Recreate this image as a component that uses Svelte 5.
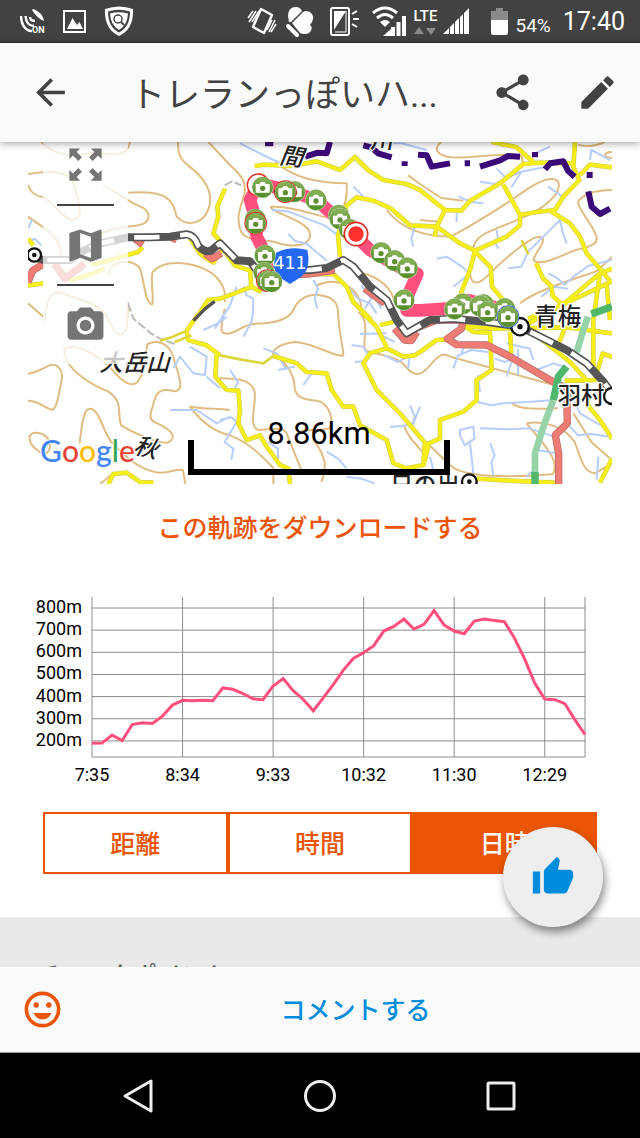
<script lang="ts">
  type Marker = { x: number; y: number; ring?: string };

  const contours = [
    "M300,152C420,145 432,170 446,224C476,255 530,250 545,190C555,140 520,100 480,70C448,45 450,20 450,0",
    "M541,0L606,69C640,100 655,120 650,154C640,190 620,230 640,270C660,300 700,290 740,300C800,320 840,310 846,284C850,250 800,235 760,215C735,205 715,190 740,194C800,195 850,215 890,225C940,225 960,190 956,124C870,122 800,110 742,60",
    "M226,134C240,130 300,180 330,190C370,205 375,240 330,250C290,255 240,260 220,276",
    "M0,96C60,85 130,85 138,130C150,180 175,230 130,234C100,225 80,180 40,164C15,160 5,145 0,128",
    "M0,224L46,256C80,280 100,300 100,354",
    "M40,0C90,50 140,40 190,34C240,36 300,50 306,0",
    "M242,400C240,350 320,350 336,380C350,420 350,480 372,488C380,480 366,410 374,390C400,360 440,360 480,366C540,375 600,415 590,480",
    "M0,484L46,524",
    "M50,540C55,450 80,440 120,460C180,480 220,490 240,530C260,580 280,590 296,560L300,480",
    "M110,620C150,600 220,650 250,680C290,730 320,740 335,710C360,680 350,620 360,605C400,590 430,610 440,660C460,720 465,745 440,748C400,738 385,745 375,790C365,820 360,835 390,845C430,865 450,885 420,902C390,905 310,870 280,850C265,820 290,780 240,748C180,725 120,680 110,640Z",
    "M0,695C40,690 60,665 80,668C105,680 105,700 100,720C90,770 85,805 70,803C45,795 30,775 0,776",
    "M5,890C0,865 50,865 65,900C70,935 50,940 35,930C15,915 5,905 5,890",
    "M155,905C160,860 165,800 185,800C215,800 225,870 250,900C290,940 320,975 380,990C420,1000 450,975 465,985L472,1026",
    "M216,1026L261,990",
    "M606,804C570,800 520,800 486,794C520,840 560,870 606,880C660,900 700,940 736,978V1026",
    "M590,500C580,560 570,575 600,575C630,570 640,550 680,545C740,545 780,535 796,504C810,470 840,460 860,458C900,460 925,470 930,504C930,560 945,610 946,640C930,650 850,600 800,600C760,605 735,620 735,635C770,660 800,690 800,740C810,780 850,770 880,780C910,800 920,850 900,860C880,866 840,862 820,866",
    "M576,709C640,710 670,715 680,750C685,790 660,850 690,864C730,864 760,850 776,874L820,984",
    "M856,890C880,930 905,960 880,1020",
    "M991,510C1030,540 1000,600 1012,625C1060,640 1110,645 1130,670C1160,710 1180,700 1206,670C1230,640 1245,630 1270,645L1580,730",
    "M1006,394C1060,410 1090,440 1100,480",
    "M866,430C930,400 1000,440 1000,500",
    "M1076,204C1120,260 1180,282 1270,284C1330,250 1430,190 1500,140C1570,95 1610,105 1585,155C1540,215 1460,235 1400,262C1350,280 1335,300 1335,330",
    "M1326,394C1330,430 1350,430 1380,400C1430,350 1500,290 1530,284C1570,285 1520,330 1516,355C1540,375 1600,340 1640,325C1690,315 1720,305 1700,270C1680,230 1650,200 1650,180C1665,155 1700,145 1752,144",
    "M1476,484C1530,440 1650,410 1710,385L1752,344",
    "M1240,0C1215,20 1225,40 1270,46C1340,50 1400,30 1480,42L1486,64",
    "M1140,100L1176,126L1240,168L1306,176M1176,234L1240,240",
    "M1650,8C1680,16 1710,10 1730,0M1752,30C1725,30 1725,46 1752,48",
    "M1451,784C1480,805 1540,800 1590,799",
    "M1496,844C1550,835 1610,855 1640,900C1660,950 1665,990 1700,994L1752,965",
    "M1496,844C1530,890 1600,950 1575,996C1480,1004 1340,1010 1280,980C1230,940 1200,900 1170,880",
    "M1636,814L1690,900L1752,955",
    "M1128,850C1140,890 1170,910 1200,950",
  ];

  const streams = [
    "M636,4L736,54L766,64M731,204L780,208L836,230L890,250L930,280M781,276L800,296L836,305L896,356M1066,4L1120,4L1196,24M976,134L1006,164",
    "M1156,314L1150,290L1161,254M626,434L606,490L560,560M646,434L656,460L676,470L674,520M856,414L870,440L860,470L868,500",
    "M960,434L990,470L1026,484L1046,514M1000,430L1030,470L1010,500M1026,440L1060,500",
    "M1356,119L1400,126L1476,90L1556,74M1406,80L1430,104M1450,136L1480,90M1566,14L1521,34M1686,54L1690,24L1720,40L1746,54",
    "M1291,164L1330,180L1366,184M1286,240V214M1226,350L1256,344L1296,370L1326,394L1276,434M1441,379L1480,374L1500,330L1540,290L1576,254L1596,234L1604,270L1616,304",
    "M1406,264L1410,290L1400,300L1412,320M1561,394L1590,410L1610,428L1636,404L1680,372L1752,354M1540,464L1576,434L1620,440M1560,134L1590,154L1610,170",
    "M0,260L12,234M0,300L20,290L40,310M526,564L570,544L596,524M436,679L456,644L496,694L531,699L536,644L486,614M536,704L576,739M426,804L506,804L566,844L606,824",
    "M646,584L670,540L676,504M706,619L746,634L776,684M750,684L800,674M606,684L630,720L620,740M826,729L851,694M576,834L610,826L626,840L590,900L616,920L610,954",
    "M720,900L750,920L750,950M896,929L930,950L956,979M956,1004L1000,1010L1040,1024M1086,854L1126,852L1156,844L1176,794M1146,790L1160,824L1150,860",
    "M971,609L1006,614L1020,640M980,660L1010,658M996,576L1076,574M1070,640L1110,660L1146,640L1140,680M1060,580L1100,600",
    "M1276,679L1290,640L1330,624L1380,630M1310,600L1300,640M1436,604L1480,614L1506,620L1516,654M1456,644L1436,704M1420,620L1460,640",
    "M1346,779L1390,790L1426,784L1500,780L1576,774M1356,859L1440,862L1506,859L1576,884M1296,864L1336,854L1340,890L1310,910L1296,880ZM1326,904L1336,994M1386,904L1400,940L1390,960L1396,1000",
    "M1616,734L1640,780L1656,814L1716,849M1626,854L1650,880L1690,876L1746,884M1526,924L1586,934M1496,1004L1526,974M1206,944L1216,984M1711,944L1706,1014M1526,684L1576,664L1606,674",
    "M1350,700L1356,750M1470,620V700M1400,650L1430,660L1460,650",
  ];

  const yellowRoads = [
    "M680,72L710,68L790,72L866,58L936,84L981,45L1020,84L1066,114L1136,126L1176,144L1251,204L1300,206L1326,176L1416,124L1486,66L1536,62L1640,64",
    "M1391,0L1466,16L1516,60",
    "M1641,0L1636,74L1654,114L1606,164L1581,204L1526,210L1476,219L1426,128",
    "M1566,206L1626,244L1656,284L1676,334L1716,380L1752,424",
    "M1656,99L1686,68L1752,76",
    "M936,344L930,280L956,190L986,166L1036,176L1090,200L1146,250L1226,254L1296,304L1341,326L1436,284L1476,249L1476,219M1226,254L1220,284M1226,254L1251,204",
    "M1341,326L1326,384L1298,456M1341,328L1388,376L1392,434L1426,474",
    "M1524,364L1546,410L1570,432L1574,462L1604,488L1716,394L1752,380M1604,488L1752,418M1716,394L1696,534V680M1736,430L1746,534M1604,488L1500,530",
    "M591,140L568,194L571,224L556,274L576,296",
    "M486,288L516,336L556,362L584,320L620,370L666,386L670,434L700,450M670,434L626,452L576,470L540,474L516,510L476,566",
    "M476,566L480,594L536,610L576,640",
    "M736,642L806,664L836,690L896,694L911,744L946,794L976,794L996,850L1076,894L1096,964L1136,979L1186,969L1201,914L1116,814L1046,744L1006,664L1026,634L1076,619L1126,644L1160,640L1176,630L1226,594L1260,592",
    "M566,634L562,704L596,744L631,746L636,804L631,844L656,894L696,880L716,914L756,969L781,979L786,1026",
    "M1000,510L1046,554L1076,616M1056,549L1096,540M720,398L820,398L916,396L956,434L976,480L1030,534",
    "M1306,550L1336,570L1386,572L1391,684L1346,714V774L1306,809L1236,834V889L1190,910L1186,974",
    "M1496,560L1556,604L1626,660L1676,714L1680,790L1716,834L1752,890",
    "M1446,570L1450,634M1306,552L1400,560L1620,556L1752,574M1610,560L1590,610M1752,645L1724,634L1700,714L1610,716M1500,545L1640,470",
    "M1346,1010L1440,1016L1580,1022M1716,1022L1752,950",
    "M0,430L46,424M241,1026L256,996L296,992L336,1020L376,1022M0,290L16,310",
    "M76,370L130,414L180,400L230,380M190,370L330,330L344,316",
  ];

  const thinRoads = "M476,566L430,586L396,596M576,640L636,652L706,664L736,642M1481,294L1501,338M440,600L490,580";

  const redRoads = [
    "M1160,560L1226,534L1306,534L1300,560L1258,590L1286,608L1376,609L1446,644L1566,714L1616,739L1618,844L1582,879L1592,934V1026",
    "M1100,560L1130,594L1150,596L1166,570",
    "M46,366L14,386L0,420",
    "M80,366L110,410L170,366",
    "M320,290L344,308M430,286L446,294M532,334L552,350L580,334M700,400L840,396L920,384M1010,440L1070,484",
  ];

  const railway =
    "M0,340L46,354H126L166,326L216,304L300,286H366L426,284L476,277Q500,280 510,310Q530,335 550,325L576,304L626,355L666,358L686,384H846L896,378L946,354L976,374L1026,434L1076,474L1106,534L1136,574L1206,534L1276,530L1380,540L1476,554L1616,624L1676,664L1726,719L1752,754";

  const borders =
    "M711,4H736M831,44L870,32L896,34L906,0M1006,10L1030,16L1050,34L1091,46M1130,72V58M1170,38L1196,40L1211,74L1266,64M1310,64H1326M1356,74L1416,55L1440,42L1476,44M1521,30V46M1551,82L1566,64L1606,58L1620,86L1640,104M1676,99H1694M1681,148L1691,194L1716,216L1746,200";

  const track =
    "M726,414L706,324L686,284L681,224L666,174L691,124L776,144L866,174L916,219L976,274L1026,324L1116,376L1168,395L1140,460L1136,505L1176,505L1276,498L1320,474L1436,505";

  const green = "#5f8f32";
  const red = "#e02a20";

  const markers: Marker[] = [
    { x: 704, y: 136 },
    { x: 800, y: 149 },
    { x: 772, y: 149, ring: red },
    { x: 864, y: 174 },
    { x: 932, y: 220 },
    { x: 936, y: 231 },
    { x: 964, y: 262 },
    { x: 1059, y: 332 },
    { x: 1100, y: 356 },
    { x: 1138, y: 378 },
    { x: 1128, y: 474 },
    { x: 682, y: 232 },
    { x: 683, y: 244, ring: red },
    { x: 711, y: 340 },
    { x: 708, y: 392 },
    { x: 718, y: 416, ring: red },
    { x: 731, y: 419 },
    { x: 1304, y: 486 },
    { x: 1280, y: 501 },
    { x: 1366, y: 488 },
    { x: 1356, y: 492 },
    { x: 1379, y: 509 },
    { x: 1430, y: 500 },
    { x: 1440, y: 524, ring: "#3a6fd0" },
  ];

  const chart = { left: 92, right: 585, top: 27, bottom: 187 };

  const elevations = [
    189, 190, 226, 202, 274, 282, 279, 312, 362, 383, 381, 384, 381, 439, 433, 414, 390, 386, 448, 481,
    427, 387, 336, 395, 455, 521, 573, 598, 630, 696, 717, 750, 705, 726, 788, 723, 696, 684, 741, 750,
    744, 738, 663, 570, 461, 389, 386, 368, 295, 229,
  ];
  const heights = [800, 700, 600, 500, 400, 300, 200];
  const times = ["7:35", "8:34", "9:33", "10:32", "11:30", "12:29"];

  const step = (chart.right - chart.left) / (elevations.length - 1);
  const yOf = (m: number) => 38 + (800 - m) * 0.2215;
  const line = elevations.map((m, i) => `${chart.left + i * step},${yOf(m)}`).join(" ");

  const axes = ["距離", "時間", "日時"];
  let axis = $state("日時");
</script>

<div class="screen">
  <div class="status">
    <svg width="26" height="30" viewBox="0 0 26 30" fill="none" stroke="#fff" stroke-width="2.4">
      <path d="M13 3C19 5 23 9 24 15C19 13 15 9 12 4Z" fill="#fff" stroke="none" />
      <path d="M1 10C1 18 5 25 12 25M5.500 10C6 16 8 20 14 20M10 11C10 14 12 15 15 15" />
      <text x="12" y="27" class="tiny">ON</text>
    </svg>
    <svg width="24" height="30" viewBox="0 0 24 30">
      <rect x="1" y="5" width="21" height="21" fill="none" stroke="#fff" stroke-width="2" />
      <path d="M4 23L9.500 12L14 19L16.500 16L20 23Z" fill="#fff" />
    </svg>
    <svg width="30" height="32" viewBox="0 0 30 32">
      <path d="M1 4Q15 -1 29 4Q30 24 15 31Q0 24 1 4Z" fill="#fff" />
      <path d="M4 6.500Q15 3 26 6.500Q26 22 15 27.500Q4 22 4 6.500Z" fill="#424242" />
      <path d="M6 8.500Q15 6 24 8.500Q23.500 20 15 25Q6.500 20 6 8.500Z" fill="#fff" />
      <circle cx="14" cy="14" r="4" fill="none" stroke="#424242" stroke-width="1.500" />
      <path d="M17 17L20 20" stroke="#424242" stroke-width="2" />
    </svg>
    <div class="status-right">
      <svg width="30" height="30" viewBox="0 0 30 30" fill="none" stroke="#fff">
        <path d="M14 3L25 9L17 27L6 21Z" stroke-width="2.400" stroke-linejoin="round" />
        <path d="M9 5L2 16M6 5L1 12M12 5L5 16M28 14L22 26M29 18L24 26M25 14L20 24" stroke-width="1.500" />
      </svg>
      <svg width="34" height="34" viewBox="0 0 34 34" fill="#fff">
        <path d="M6 18L5 12Q5 3 13 3Q17 3 19 7L8 18Z" />
        <path d="M9 19L20 8Q25 5 29 10Q32 15 27 21Q31 24 26 29Q22 31 17 29Z" />
        <path d="M5 22L14 31" stroke="#fff" stroke-width="4" stroke-linecap="round" />
      </svg>
      <svg width="42" height="30" viewBox="0 0 42 30" fill="none" stroke="#fff">
        <rect x="8" y="2" width="18" height="27" rx="2" stroke-width="2" />
        <path d="M11 5H23L11 24Z" fill="#fff" stroke="none" />
        <path d="M23 5V26H12" stroke-width="1" />
        <path d="M29 8L34 5M30 13H36M29 18L34 21" stroke-width="2" />
      </svg>
      <svg width="36" height="34" viewBox="0 0 36 34" fill="none" stroke="#fff" stroke-width="3">
        <path d="M2 9Q14 -1 26 9M6 14Q14 7 22 14" />
        <path d="M9 18Q14 14 19 18L14 23Z" fill="#fff" stroke="none" />
        <path d="M12 32L20 25V32Z" fill="#fff" stroke="none" />
        <path d="M22 23V32M27.500 18V32M33 12V32" stroke-width="4" />
      </svg>
      <div class="network">
        <span>LTE</span>
        <svg width="24" height="8" viewBox="0 0 24 8" fill="#8a8a8a"><path d="M1 7L6 0L11 7ZM13 1H23L18 8Z" /></svg>
      </div>
      <svg width="26" height="30" viewBox="0 0 26 30" fill="#fff">
        <path d="M0 28L6 22V28ZM7 21L11 17V28H7ZM12 16L16 12V28H12ZM17 11L20 8V28H17ZM21 7L26 2V28H21Z" />
      </svg>
      <svg width="34" height="30" viewBox="2 0 34 30">
        <path d="M18 5H23V2H30V5H35V15H18Z" fill="#8a8a8a" />
        <path d="M18 14H35V27Q35 29 33 29H20Q18 29 18 27Z" fill="#fff" />
      </svg>
      <span class="percent">54%</span>
      <span class="time">17:40</span>
    </div>
  </div>

  <header>
    <button class="bar-button" aria-label="戻る">
      <svg viewBox="0 0 24 24"><path d="M20 11H7.830l5.590-5.590L12 4l-8 8 8 8 1.410-1.410L7.830 13H20v-2z" /></svg>
    </button>
    <h1>トレランっぽいハ...</h1>
    <button class="bar-button" aria-label="共有">
      <svg viewBox="0 0 24 24"><path d="M18 16.080c-.76 0-1.440.3-1.960.77L8.910 12.700c.05-.23.09-.46.09-.7s-.04-.47-.09-.7l7.050-4.110c.54.5 1.250.81 2.040.81 1.660 0 3-1.340 3-3s-1.340-3-3-3-3 1.340-3 3c0 .24.04.47.09.7L8.040 9.810C7.500 9.310 6.790 9 6 9c-1.660 0-3 1.340-3 3s1.340 3 3 3c.79 0 1.500-.31 2.040-.81l7.120 4.160c-.05.21-.08.43-.08.65 0 1.610 1.310 2.920 2.920 2.920s2.920-1.310 2.920-2.920-1.310-2.920-2.920-2.920z" /></svg>
    </button>
    <button class="bar-button" aria-label="編集">
      <svg viewBox="0 0 24 24"><path d="M3 17.250V21h3.750L17.810 9.940l-3.750-3.750L3 17.250zM20.710 7.040c.39-.39.39-1.020 0-1.410l-2.340-2.340c-.39-.39-1.020-.39-1.410 0l-1.830 1.830 3.750 3.750 1.830-1.830z" /></svg>
    </button>
  </header>

  <main>
    <div class="content">
      <section class="map">
        <svg class="tiles" viewBox="0 0 1752 1026" fill="none" stroke-linejoin="round">
          <defs>
            <linearGradient id="pin" x2="0" y2="1">
              <stop offset="0" stop-color="#8bb45a" />
              <stop offset="1" stop-color="#4f8a28" />
            </linearGradient>
          </defs>
          <rect width="1752" height="1026" fill="#fff" />
          <path d={contours.join("")} stroke="#dfbd82" stroke-width="6" />
          <path d={streams.join("")} stroke="#b7cdfb" stroke-width="6" />
          <path d="M300,484L316,530L370,575L396,590L440,606M590,130L612,118L640,130" stroke="#bbb" stroke-width="6" stroke-dasharray="26 8" />
          <path d={yellowRoads.join("")} stroke="#cdc85a" stroke-width="14" />
          <path d={yellowRoads.join("")} stroke="#f5ee18" stroke-width="11" />
          <path d={thinRoads} stroke="#dcd640" stroke-width="8" />
          <path d="M560,478L532,500L496,536" stroke="#555" stroke-width="10" />
          <path d={redRoads.join("")} stroke="#b06a64" stroke-width="22" />
          <path d={redRoads.join("")} stroke="#ee7c74" stroke-width="18" />
          <path d="M1576,774L1546,854L1521,934V1026M1646,630L1666,564L1680,524" stroke="#97d3a6" stroke-width="20" />
          <path d="M1616,674L1591,704L1576,774M1521,990V1026M1690,516L1752,494" stroke="#50b86c" stroke-width="22" />
          <path d={railway} stroke="#555" stroke-width="24" />
          <path d={railway} stroke="#fff" stroke-width="14" stroke-dasharray="76 62" stroke-dashoffset="-60" />
          <path d={borders} stroke="#3c0a78" stroke-width="18" />

          <g class="station">
            <circle cx="19" cy="339" r="20" />
            <circle cx="1476" cy="554" r="26" />
            <circle cx="1752" cy="762" r="24" />
            <circle cx="1324" cy="1019" r="22" />
          </g>
          <g fill="#111">
            <circle cx="19" cy="339" r="7" />
            <circle cx="1476" cy="554" r="8" />
            <circle cx="1324" cy="1019" r="7" />
          </g>

          <g class="place">
            <text x="1519" y="550">青梅</text>
            <text x="1589" y="787">羽村</text>
            <text x="1086" y="1056">日の出</text>
            <text transform="translate(214 688) skewX(-16)">大岳山</text>
            <text transform="translate(314 932) rotate(14) skewX(-14)">秋</text>
            <text transform="translate(752 64) rotate(8) skewX(-14)">間</text>
            <text transform="translate(1026 18) skewX(-10)">川</text>
          </g>

          <path d={track} stroke="#ff4f7d" stroke-width="38" />
          <path d="M744,332Q790,310 838,324Q850,380 820,404L786,426L752,404Q730,380 744,332Z" fill="#2468f2" />
          <text class="route" x="786" y="382">411</text>

          <circle cx="691" cy="129" r="33" fill="#fff" stroke={red} stroke-width="4" />
          {#each markers as m}
            <g transform="translate({m.x} {m.y})">
              <circle r={m.ring ? 34 : 32} fill={m.ring ?? "#d9e6c8"} />
              {#if m.ring}
                <circle r="31" fill="#fff" />
              {/if}
              <circle r="30" fill="url(#pin)" stroke={green} stroke-width="2" />
              <path d="M-21,-10H-10L-6,-16H6L10,-10H21V16H-21Z" fill="#fff" />
              <circle cy="3" r="8" fill={green} />
            </g>
          {/each}
          <circle cx="984" cy="276" r="35" fill="#fff" stroke={red} stroke-width="5" />
          <circle cx="984" cy="276" r="23" fill="#ff3030" />
          <text class="google" x="36" y="961"><tspan fill="#4285f4">G</tspan><tspan fill="#ea4335">o</tspan><tspan fill="#fbbc05">o</tspan><tspan fill="#4285f4">g</tspan><tspan fill="#34a853">l</tspan><tspan fill="#ea4335">e</tspan></text>
        </svg>

        <div class="tools">
          <button aria-label="全画面">
            <svg viewBox="0 0 24 24"><path d="M3 3H9L7 5L10 8L8 10L5 7L3 9ZM21 3V9L19 7L16 10L14 8L17 5L15 3ZM3 21V15L5 17L8 14L10 16L7 19L9 21ZM21 21H15L17 19L14 16L16 14L19 17L21 15Z" /></svg>
          </button>
          <button aria-label="地図">
            <svg viewBox="0 0 24 24"><path d="M20.500 3l-.16.03L15 5.100 9 3 3.360 4.900c-.21.07-.36.25-.36.48V20.500c0 .28.22.5.5.5l.16-.03L9 18.900l6 2.100 5.640-1.900c.21-.07.36-.25.36-.48V3.500c0-.28-.22-.5-.5-.5zM15 19l-6-2.110V5l6 2.110V19z" /></svg>
          </button>
          <button aria-label="写真">
            <svg viewBox="0 0 24 24" fill-rule="evenodd"><path d="M9 2L7.170 4H4c-1.100 0-2 .9-2 2v12c0 1.100.9 2 2 2h16c1.100 0 2-.9 2-2V6c0-1.100-.9-2-2-2h-3.170L15 2H9zm3 15c-2.760 0-5-2.240-5-5s2.240-5 5-5 5 2.240 5 5-2.240 5-5 5z" /><circle cx="12" cy="12" r="3.200" /></svg>
          </button>
        </div>
        <div class="scale">8.86km</div>
      </section>

      <button class="download">この軌跡をダウンロードする</button>

      <svg class="chart" viewBox="0 0 640 220">
        <g stroke="#8c8c8c" stroke-width="1">
          {#each heights as h}
            <line x1={chart.left} x2={chart.right} y1={yOf(h)} y2={yOf(h)} />
          {/each}
          {#each times as _, i}
            <line x1={chart.left + i * step * 9} x2={chart.left + i * step * 9} y1={chart.top} y2={chart.bottom} />
          {/each}
          <path d="M{chart.left} {chart.bottom}H{chart.right}V{chart.top}" fill="none" />
        </g>
        <polyline points={line} />
        {#each heights as h}
          <text x="82" y={yOf(h) + 5} text-anchor="end">{h}m</text>
        {/each}
        {#each times as t, i}
          <text x={chart.left + i * step * 9} y="211" text-anchor="middle">{t}</text>
        {/each}
      </svg>

      <div class="axes">
        {#each axes as a}
          <button class:active={axis === a} aria-pressed={axis === a} onclick={() => (axis = a)}>{a}</button>
        {/each}
      </div>

      <section class="checkpoints">
        <h2>チェックポイント</h2>
      </section>
    </div>

    <button class="like" aria-label="いいね">
      <svg viewBox="0 0 24 24"><path d="M1 21h4V9H1v12zm22-11c0-1.100-.9-2-2-2h-6.310l.95-4.570.03-.32c0-.41-.17-.79-.44-1.060L14.170 1 7.590 7.590C7.220 7.950 7 8.450 7 9v10c0 1.100.9 2 2 2h9c.83 0 1.540-.5 1.840-1.220l3.020-7.050c.09-.23.14-.47.14-.73v-2z" /></svg>
    </button>
  </main>

  <footer>
    <button class="smile" aria-label="スタンプ">
      <svg viewBox="0 0 24 24">
        <circle cx="12" cy="12" r="9" fill="none" stroke="currentColor" stroke-width="2" />
        <circle cx="8.500" cy="9.500" r="1.500" />
        <circle cx="15.500" cy="9.500" r="1.500" />
        <path d="M7 14H17Q15.500 17.500 12 17.500T7 14Z" />
      </svg>
    </button>
    <button class="comment">コメントする</button>
  </footer>

  <nav>
    <button aria-label="バック"><svg viewBox="0 0 40 40"><path d="M6 20L32 5V35Z" /></svg></button>
    <button aria-label="ホーム"><svg viewBox="0 0 40 40"><circle cx="20" cy="20" r="14.500" /></svg></button>
    <button aria-label="履歴"><svg viewBox="0 0 40 40"><rect x="7" y="7" width="26" height="26" rx="1" /></svg></button>
  </nav>
</div>

<style>
  :global(body) {
    background: #000;
  }

  .screen {
    display: flex;
    flex-direction: column;
    height: 100vh;
    overflow: hidden;
    background: #fff;
    color: #424242;
    font-family: Roboto, "Noto Sans CJK JP", sans-serif;
  }

  button {
    display: flex;
    align-items: center;
    justify-content: center;
    margin: 0;
    padding: 0;
    border: 0;
    background: none;
    color: inherit;
    font: inherit;
    cursor: pointer;
  }

  .status {
    display: flex;
    flex: none;
    align-items: center;
    gap: 17px;
    height: 43px;
    padding: 0 15px 0 20px;
    box-sizing: border-box;
    background: #424242;
    border-bottom: 1px solid #303030;
    color: #fff;
  }

  .status-right {
    display: flex;
    align-items: center;
    gap: 6px;
    margin-left: auto;
  }

  .tiny {
    fill: #fff;
    stroke: none;
    font-size: 9px;
    font-weight: 700;
  }

  .network {
    display: flex;
    flex-direction: column;
    align-items: center;
    gap: 3px;
    width: 24px;
    font-size: 15px;
    font-weight: 500;
    line-height: 16px;
  }

  .percent {
    padding-top: 8px;
    font-size: 19px;
  }

  .time {
    margin-left: 6px;
    font-size: 25px;
  }

  header {
    position: relative;
    z-index: 1;
    display: flex;
    flex: none;
    align-items: center;
    height: 99px;
    padding: 0 0 0 8px;
    background: #fafafa;
    box-shadow: 0 1px 8px rgba(0, 0, 0, 0.4);
  }

  .bar-button {
    flex: none;
    width: 85px;
    height: 85px;
  }

  .bar-button svg {
    width: 43px;
    height: 43px;
    fill: currentColor;
  }

  h1 {
    flex: 1;
    min-width: 0;
    margin: 0 20px 0 37px;
    padding-bottom: 3px;
    font-size: 35px;
    font-weight: 400;
    white-space: nowrap;
  }

  main {
    position: relative;
    flex: 1;
    min-height: 0;
  }

  .content {
    display: flex;
    flex-direction: column;
    height: 100%;
    overflow: hidden;
  }

  .map {
    position: relative;
    flex: none;
    margin: 0 28px;
    overflow: hidden;
  }

  .tiles {
    display: block;
    width: 100%;
  }

  .station {
    fill: #fff;
    stroke: #111;
    stroke-width: 7px;
  }

  .place {
    fill: #222;
    stroke: #fff;
    stroke-width: 8px;
    paint-order: stroke;
    font-family: "Noto Sans CJK JP", sans-serif;
    font-size: 70px;
    font-weight: 500;
  }

  .route {
    fill: #fff;
    font-family: "DejaVu Sans", sans-serif;
    font-size: 52px;
    text-anchor: middle;
  }

  .google {
    stroke: #fff;
    stroke-width: 6px;
    paint-order: stroke;
    font-family: Lato, sans-serif;
    font-size: 90px;
    font-weight: 500;
  }

  .tools {
    position: absolute;
    top: -18px;
    left: 15px;
    width: 85px;
    background: rgba(255, 255, 255, 0.75);
  }

  .tools button {
    width: 57px;
    height: 80px;
    margin: 0 auto;
    box-sizing: border-box;
    color: #757575;
  }

  .tools button + button {
    border-top: 2px solid #424242;
  }

  .tools svg {
    width: 43px;
    height: 43px;
    fill: currentColor;
  }

  .scale {
    position: absolute;
    bottom: 9px;
    left: 50%;
    width: 262px;
    height: 35px;
    margin-left: -132px;
    box-sizing: border-box;
    border: 6px solid #000;
    border-top: 0;
    color: #000;
    font-size: 31px;
    line-height: 0;
    text-indent: 4px;
    text-align: center;
  }

  .scale::before {
    content: "";
    display: block;
    margin-top: -6px;
  }

  .download {
    flex: none;
    height: 86px;
    padding-bottom: 3px;
    color: #eb5505;
    font-size: 25px;
    font-weight: 500;
  }

  .chart {
    display: block;
    flex: none;
    width: 100%;
    fill: #000;
    font-size: 18px;
  }

  .chart polyline {
    fill: none;
    stroke: #ff4f7d;
    stroke-width: 3px;
  }

  .axes {
    display: flex;
    flex: none;
    margin: 22px 43px 43px;
  }

  .axes button {
    flex: 1;
    height: 62px;
    padding-bottom: 3px;
    box-sizing: border-box;
    border: 2px solid #eb5505;
    color: #eb5505;
    font-size: 25px;
    font-weight: 500;
  }

  .axes .active {
    background: #eb5505;
    color: #fff;
  }

  .checkpoints {
    flex: 1 0 auto;
    padding: 47px 37px;
    background: #e9e9e9;
  }

  h2 {
    margin: 0;
    color: #616161;
    font-size: 24px;
    font-weight: 500;
    line-height: 24px;
  }

  .like {
    position: absolute;
    right: 37px;
    bottom: 40px;
    width: 100px;
    height: 100px;
    border-radius: 50%;
    background: #eee;
    box-shadow: 2px 5px 8px rgba(0, 0, 0, 0.45);
    color: #008cdc;
  }

  .like svg {
    width: 44px;
    height: 44px;
    fill: currentColor;
  }

  footer {
    position: relative;
    display: grid;
    grid-template-columns: 85px 1fr 14px;
    flex: none;
    height: 85px;
    background: #fafafa;
  }

  .smile {
    color: #eb5505;
  }

  .smile svg {
    width: 43px;
    height: 43px;
    fill: currentColor;
  }

  .comment {
    padding-bottom: 3px;
    color: #008cdc;
    font-size: 25px;
    font-weight: 500;
  }

  nav {
    display: grid;
    grid-template-columns: repeat(3, 1fr);
    flex: none;
    height: 85px;
    padding: 0 48px;
    border-top: 1px solid #9a9a9a;
    background: #000;
  }

  nav svg {
    width: 40px;
    height: 40px;
    fill: none;
    stroke: #eee;
    stroke-width: 3px;
    stroke-linejoin: round;
  }
</style>
